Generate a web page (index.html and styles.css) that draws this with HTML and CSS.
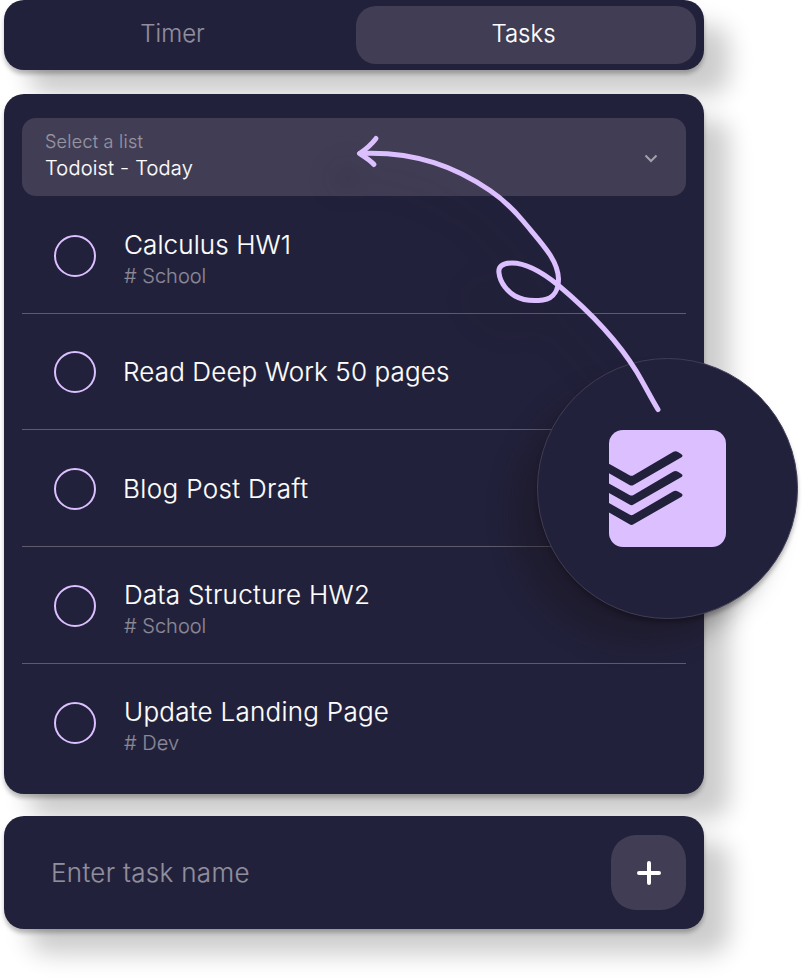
FILE: index.html
```html
<!DOCTYPE html>
<html lang="en">
<head>
<meta charset="utf-8">
<title>Tasks</title>
<link rel="stylesheet" href="styles.css">
</head>
<body>
<main class="board">
  <nav class="panel tabs">
    <div class="tab">Timer</div>
    <div class="tab active">Tasks</div>
  </nav>
  <section class="panel list">
    <div class="select">
      <div class="select-text">
        <div class="label">Select a list</div>
        <div class="value">Todoist - Today</div>
      </div>
      <svg class="chevron" width="14" height="10" viewBox="0 0 14 10"><path d="M1.500 2.500 7 8 12.500 2.500"/></svg>
    </div>
    <ul class="tasks">
      <li class="task first"><span class="check"></span><div class="info tagged"><div class="name n1">Calculus HW1</div><div class="tag"># School</div></div></li>
      <li class="task second"><span class="check"></span><div class="info"><div class="name n2">Read Deep Work 50 pages</div></div></li>
      <li class="task"><span class="check"></span><div class="info"><div class="name n3">Blog Post Draft</div></div></li>
      <li class="task"><span class="check"></span><div class="info tagged"><div class="name n4">Data Structure HW2</div><div class="tag"># School</div></div></li>
      <li class="task"><span class="check"></span><div class="info tagged"><div class="name n5">Update Landing Page</div><div class="tag"># Dev</div></div></li>
    </ul>
  </section>
  <section class="panel entry">
    <div class="placeholder">Enter task name</div>
    <div class="add"><svg width="24" height="24" viewBox="0 0 24 24"><path d="M12 2v20M2 12h20"/></svg></div>
  </section>
</main>
<svg class="arrow shade" width="802" height="979" viewBox="0 0 802 979">
  <use href="#curve"/>
</svg>
<div class="badge">
  <svg width="117" height="117" viewBox="0 0 117 117">
    <rect class="tile" width="117" height="117" rx="14"/>
    <g class="marks">
      <path id="mark" d="M0 33.7 20.5 45.2Q22.5 46.4 24.5 45.2L64 22Q66.500 20.700 69 22L72.500 24.200Q74.500 25.800 72.500 27.300L24.500 54.900Q22.500 56.200 20.500 54.900L0 43.200Z"/>
      <use href="#mark" y="19.700"/>
      <use href="#mark" y="39.400"/>
    </g>
  </svg>
</div>
<svg class="arrow" width="802" height="979" viewBox="0 0 802 979">
  <g id="curve">
    <path d="M658 409.500C651 398 644 384 636.500 371.500C616 338 583 306 558 285C545 274.500 528 263 512 263C502 263 498 267 499 273C500 283 508 292 515 296C523 300.500 535 301 543 300C555 298.500 558.500 288 558.500 279C558 260 543 245 523.500 221.500C513.500 209.500 504 200 490 190.500C457 168 417 151 360 153.500"/>
    <path d="M376 138.500C371 145 365 150 359.500 153.500C365 157 370 160 374 164.500"/>
  </g>
</svg>
</body>
</html>
```
FILE: styles.css
```css
* { box-sizing: border-box; }
body {
  margin: 0;
  position: relative;
  width: 802px;
  height: 979px;
  overflow: hidden;
  background: #fff;
  font-family: Inter, sans-serif;
  font-weight: 300;
  -webkit-text-stroke: .16px currentColor;
  color: #fff;
}
.board { width: 700px; margin-left: 4px; display: flex; flex-direction: column; }
.panel {
  background: #22213b;
  border-radius: 20px;
  box-shadow: 0 4px 4px rgba(0,0,0,.25), 25px 25px 25px rgba(0,0,0,.2);
}
.tabs { height: 70px; display: flex; padding: 6px 8px 6px 0; margin-bottom: 24px; }
.tab {
  flex: 1;
  display: flex;
  align-items: center;
  justify-content: center;
  font-size: 24px;
  line-height: 30px;
  padding: 0 15px 3px 0;
  color: #918f9d;
}
.tab.active { flex: none; width: 340px; background: #403d55; border-radius: 20px; color: #fff; padding-right: 5px; }
.list { height: 700px; padding: 24px 18px 0; margin-bottom: 22px; }
.select {
  height: 78px;
  border-radius: 14px;
  background: #403d55;
  display: flex;
  align-items: center;
  justify-content: space-between;
  padding: 0 28px 4px 23px;
}
.label { font-size: 18px; line-height: 26px; letter-spacing: .24px; color: #9795a2; }
.value { font-size: 20px; line-height: 26px; letter-spacing: .2px; }
.chevron { margin-top: 6px; fill: none; stroke: #a3a1ac; stroke-width: 2; }
.tasks { list-style: none; margin: 0; padding: 0; }
.task { height: 117px; display: flex; align-items: center; gap: 28px; padding: 1px 0 0 32px; border-bottom: 1px solid #5e5c6c; }
.task.first { height: 118px; padding-top: 3px; }
.task.second { height: 116px; }
.task:last-child { border-color: transparent; }
.check { width: 42px; height: 42px; border: 2px solid #dcbfff; border-radius: 50%; }
.tagged { padding-top: 9px; }
.first .tagged { padding-top: 7px; }
.name { font-size: 26px; line-height: 32px; }
.n2, .n3 { margin-left: -1px; }
.n1 { letter-spacing: .1px; }
.n2 { letter-spacing: .13px; }
.n3 { letter-spacing: .36px; }
.n4 { letter-spacing: .32px; }
.n5 { letter-spacing: .26px; }
.tag { font-size: 20px; line-height: 30px; color: #8b8996; }
.entry { height: 113px; display: flex; align-items: center; justify-content: space-between; padding: 0 18px 0 47px; }
.placeholder { font-size: 26px; line-height: 32px; letter-spacing: .32px; color: #918f9d; }
.add { width: 75px; height: 75px; border-radius: 25px; background: #403d55; display: flex; align-items: center; justify-content: center; }
.add path { stroke: #fff; stroke-width: 4; stroke-linecap: round; }
.badge {
  position: absolute;
  left: 537px;
  top: 358px;
  width: 261px;
  height: 261px;
  border-radius: 50%;
  border: 1px solid #403d55;
  background: #22213b;
  display: flex;
  align-items: center;
  justify-content: center;
  box-shadow: 0 4px 4px rgba(0,0,0,.25), -25px 25px 25px rgba(25,20,25,.35);
}
.tile { fill: #dcbfff; }
.marks { fill: #22213b; }
.arrow {
  position: absolute;
  left: 0;
  top: 0;
  fill: none;
  stroke: #dcbfff;
  stroke-width: 5;
  stroke-linecap: round;
  stroke-linejoin: round;
}
.arrow.shade {
  stroke: rgba(28,22,28,.22);
  transform: translate(-25px, 25px);
  filter: blur(13px);
}
```
